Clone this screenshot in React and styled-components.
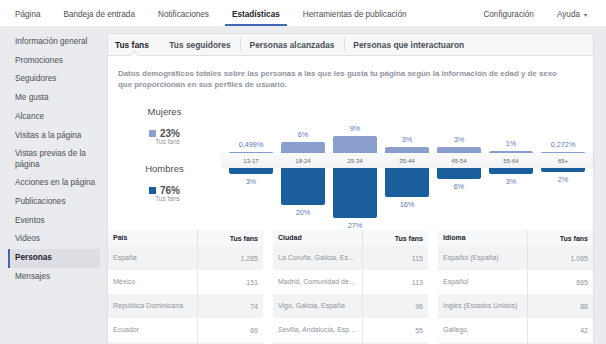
import React from "react";
import styled, { createGlobalStyle } from "styled-components";

const GlobalStyle = createGlobalStyle`
  html, body {
    margin: 0;
    padding: 0;
    height: 344px;
    overflow: hidden;
    background: #e9ebee;
    font-family: "Liberation Sans", Arial, sans-serif;
  }
`;

const navLeft = ["Página", "Bandeja de entrada", "Notificaciones", "Estadísticas", "Herramientas de publicación"];

const sideItems = [
  "Información general",
  "Promociones",
  "Seguidores",
  "Me gusta",
  "Alcance",
  "Visitas a la página",
  "Vistas previas de la página",
  "Acciones en la página",
  "Publicaciones",
  "Eventos",
  "Videos",
  "Personas",
  "Mensajes",
];

const tabs = ["Tus fans", "Tus seguidores", "Personas alcanzadas", "Personas que interactuaron"];

const ages = [
  { age: "13-17", w: 0.499, wl: "0,499%", m: 3 },
  { age: "18-24", w: 6, wl: "6%", m: 20 },
  { age: "25-34", w: 9, wl: "9%", m: 27 },
  { age: "35-44", w: 3, wl: "3%", m: 16 },
  { age: "45-54", w: 3, wl: "3%", m: 6 },
  { age: "55-64", w: 1, wl: "1%", m: 3 },
  { age: "65+", w: 0.272, wl: "0,272%", m: 2 },
];

const tables = [
  {
    title: "País",
    rows: [["España", "1.285"], ["México", "151"], ["República Dominicana", "74"], ["Ecuador", "69"]],
  },
  {
    title: "Ciudad",
    rows: [
      ["La Coruña, Galicia, España", "115"],
      ["Madrid, Comunidad de Madrid", "113"],
      ["Vigo, Galicia, España", "96"],
      ["Sevilla, Andalucía, España", "55"],
    ],
  },
  {
    title: "Idioma",
    rows: [["Español (España)", "1.065"], ["Español", "865"], ["Inglés (Estados Unidos)", "88"], ["Gallego", "42"]],
  },
];

const SCALE = 1.84;
const WOMEN = "#8a9fcd";
const MEN = "#1b5e9e";

const App = () => {
  return (
    <>
      <GlobalStyle />
      <TopNav>
        <NavGroup>
          {navLeft.map((n) => (
            <NavItem key={n} $active={n === "Estadísticas"}>
              {n}
            </NavItem>
          ))}
        </NavGroup>
        <NavGroup>
          <NavItem>Configuración</NavItem>
          <NavItem>
            Ayuda <Caret>▾</Caret>
          </NavItem>
        </NavGroup>
      </TopNav>

      <Main>
        <Sidebar>
          {sideItems.map((s) => (
            <SideItem key={s} $active={s === "Personas"}>
              {s}
            </SideItem>
          ))}
        </Sidebar>

        <Card>
          <TabBar>
            {tabs.map((t, i) => (
              <Tab key={t} $active={i === 0}>
                {t}
              </Tab>
            ))}
          </TabBar>

          <Description>
            <span>
              Datos demográficos totales sobre las personas a las que les gusta tu página según la información de edad y de sexo
            </span>
            <span>que proporcionan en sus perfiles de usuario.</span>
          </Description>

          <ChartRow>
            <Legend>
              <LegendTitle>Mujeres</LegendTitle>
              <LegendStat>
                <LegendValue>
                  <Swatch $color={WOMEN} />
                  23%
                </LegendValue>
                <LegendSub>Tus fans</LegendSub>
              </LegendStat>
              <LegendTitle $gap={18}>Hombres</LegendTitle>
              <LegendStat>
                <LegendValue>
                  <Swatch $color={MEN} />
                  76%
                </LegendValue>
                <LegendSub>Tus fans</LegendSub>
              </LegendStat>
            </Legend>

            <Bars>
              <BarRow $side="top">
                {ages.map((a) => (
                  <Col key={a.age}>
                    <BarLabel>{a.wl}</BarLabel>
                    <Bar $side="top" style={{ height: Math.max(1.2, a.w * SCALE) }} />
                  </Col>
                ))}
              </BarRow>
              <AgeStrip>
                {ages.map((a) => (
                  <AgeLabel key={a.age}>{a.age}</AgeLabel>
                ))}
              </AgeStrip>
              <BarRow $side="bottom">
                {ages.map((a) => (
                  <Col key={a.age}>
                    <Bar $side="bottom" style={{ height: Math.max(1.2, a.m * SCALE) }} />
                    <BarLabel>{a.m}%</BarLabel>
                  </Col>
                ))}
              </BarRow>
            </Bars>
          </ChartRow>

          <Tables>
            {tables.map((t) => (
              <Table key={t.title}>
                <HeadRow>
                  <NameCell $head>{t.title}</NameCell>
                  <NumCell $head>Tus fans</NumCell>
                </HeadRow>
                {t.rows.map((r, i) => (
                  <Row key={r[0]} $odd={i % 2 === 0}>
                    <NameCell>{r[0]}</NameCell>
                    <NumCell>{r[1]}</NumCell>
                  </Row>
                ))}
                <Row $odd>
                  <NameCell>&nbsp;</NameCell>
                  <NumCell>&nbsp;</NumCell>
                </Row>
              </Table>
            ))}
          </Tables>
        </Card>
      </Main>
    </>
  );
};

export default App;

const TopNav = styled.div`
  height: 26px;
  background: #fff;
  display: flex;
  justify-content: space-between;
  padding: 0 12px 0 8px;
  box-sizing: border-box;
`;

const NavGroup = styled.div`
  display: flex;
  gap: 9px;
`;

const NavItem = styled.div`
  display: flex;
  align-items: center;
  padding: 4px 7px 0;
  font-size: 8.2px;
  color: ${(p) => (p.$active ? "#1d2129" : "#4b4f56")};
  font-weight: ${(p) => (p.$active ? "bold" : "normal")};
  border-bottom: 2px solid ${(p) => (p.$active ? "#4267b2" : "transparent")};
  white-space: nowrap;
`;

const Caret = styled.span`
  font-size: 6px;
  margin-left: 4px;
  color: #606770;
`;

const Main = styled.div`
  display: flex;
  gap: 7px;
  padding: 7px 13px 0 8px;
  align-items: flex-start;
`;

const Sidebar = styled.div`
  width: 92px;
  flex-shrink: 0;
  display: flex;
  flex-direction: column;
`;

const SideItem = styled.div`
  padding: 4.1px 4px 4.1px 5px;
  line-height: 10.5px;
  font-size: 8.2px;
  color: ${(p) => (p.$active ? "#1d2129" : "#4b4f56")};
  font-weight: ${(p) => (p.$active ? "bold" : "normal")};
  background: ${(p) => (p.$active ? "#dcdee3" : "transparent")};
  border-left: 2px solid ${(p) => (p.$active ? "#4267b2" : "transparent")};
`;

const Card = styled.div`
  flex: 1;
  background: #fff;
  border: 1px solid #dddfe2;
  border-radius: 3px;
  min-height: 400px;
`;

const TabBar = styled.div`
  height: 21px;
  background: #f6f7f9;
  border-bottom: 1px solid #dddfe2;
  display: flex;
  align-items: center;
`;

const Tab = styled.div`
  position: relative;
  height: 100%;
  display: flex;
  align-items: center;
  padding: 0 9.5px;
  font-size: 8.4px;
  font-weight: bold;
  color: #4b4f56;
  white-space: nowrap;

  &:first-child {
    padding-left: 7px;
    padding-right: 11px;
  }

  & + &::before {
    content: "";
    position: absolute;
    left: 0;
    top: 4px;
    height: 12px;
    border-left: 1px solid #dddfe2;
  }

  ${(p) =>
    p.$active &&
    `
    color: #1d2129;
    &::after {
      content: "";
      position: absolute;
      left: 50%;
      bottom: -4px;
      width: 6px;
      height: 6px;
      margin-left: -3px;
      background: #fff;
      border-top: 1px solid #dddfe2;
      border-left: 1px solid #dddfe2;
      transform: rotate(45deg);
    }
  `}
`;

const Description = styled.div`
  display: flex;
  flex-direction: column;
  padding: 13px 10px 0 10px;
  font-size: 7.9px;
  line-height: 10.5px;
  font-weight: bold;
  color: #90949c;
  white-space: nowrap;
`;

const ChartRow = styled.div`
  display: flex;
  margin-top: 11px;
  padding-left: 10px;
`;

const Legend = styled.div`
  width: 93px;
  margin-right: 10px;
  flex-shrink: 0;
  display: flex;
  flex-direction: column;
  align-items: center;
  padding-top: 5px;
  color: #4b4f56;
`;

const LegendTitle = styled.div`
  font-size: 9.5px;
  line-height: 12px;
  margin-top: ${(p) => p.$gap || 0}px;
`;

const LegendStat = styled.div`
  display: flex;
  flex-direction: column;
  align-items: center;
  margin-top: 11px;
`;

const LegendValue = styled.div`
  display: flex;
  align-items: center;
  gap: 4px;
  font-size: 10px;
  line-height: 9px;
  font-weight: bold;
`;

const Swatch = styled.span`
  display: inline-block;
  width: 7px;
  height: 7px;
  background: ${(p) => p.$color};
`;

const LegendSub = styled.div`
  font-size: 6.5px;
  line-height: 7px;
  color: #90949c;
  padding-left: 6px;
`;

const Bars = styled.div`
  flex: 1;
  display: flex;
  flex-direction: column;
`;

const BarRow = styled.div`
  display: flex;
  padding: 0 4px;
  height: ${(p) => (p.$side === "top" ? 52 : 62)}px;
  align-items: ${(p) => (p.$side === "top" ? "flex-end" : "flex-start")};
`;

const Col = styled.div`
  width: 52px;
  display: flex;
  flex-direction: column;
  align-items: center;
  gap: 3px;
`;

const Bar = styled.div`
  width: 44px;
  background: ${(p) => (p.$side === "top" ? WOMEN : MEN)};
  border-radius: ${(p) => (p.$side === "top" ? "2px 2px 0 0" : "0 0 2px 2px")};
`;

const BarLabel = styled.div`
  font-size: 7.3px;
  line-height: 9px;
  color: #5b79bd;
`;

const AgeStrip = styled.div`
  height: 15px;
  display: flex;
  align-items: center;
  padding: 0 4px;
  background: linear-gradient(#fbfbfc, #f1f2f4);
  box-shadow: 0 0 2px rgba(0, 0, 0, 0.06);
`;

const AgeLabel = styled.div`
  width: 52px;
  text-align: center;
  font-size: 6px;
  color: #606770;
`;

const Tables = styled.div`
  display: flex;
  gap: 10px;
`;

const Table = styled.div`
  flex: 1;
  min-width: 0;
  display: flex;
  flex-direction: column;
`;

const HeadRow = styled.div`
  display: flex;
  height: 16px;
  background: #f7f8fa;
`;

const Row = styled.div`
  display: flex;
  height: 24px;
  background: ${(p) => (p.$odd ? "#f2f3f5" : "#fff")};
`;

const NameCell = styled.div`
  width: 58%;
  flex-shrink: 0;
  box-sizing: border-box;
  padding: 0 5px;
  border-right: 1px solid #e5e6e9;
  font-size: 7px;
  line-height: ${(p) => (p.$head ? 16 : 24)}px;
  font-weight: ${(p) => (p.$head ? "bold" : "normal")};
  color: ${(p) => (p.$head ? "#1d2129" : "#90949c")};
  overflow: hidden;
  white-space: nowrap;
  text-overflow: ellipsis;
`;

const NumCell = styled.div`
  flex: 1;
  padding: 0 5px;
  display: flex;
  align-items: center;
  justify-content: flex-end;
  font-size: 7px;
  font-weight: ${(p) => (p.$head ? "bold" : "normal")};
  color: ${(p) => (p.$head ? "#1d2129" : "#90949c")};
`;
